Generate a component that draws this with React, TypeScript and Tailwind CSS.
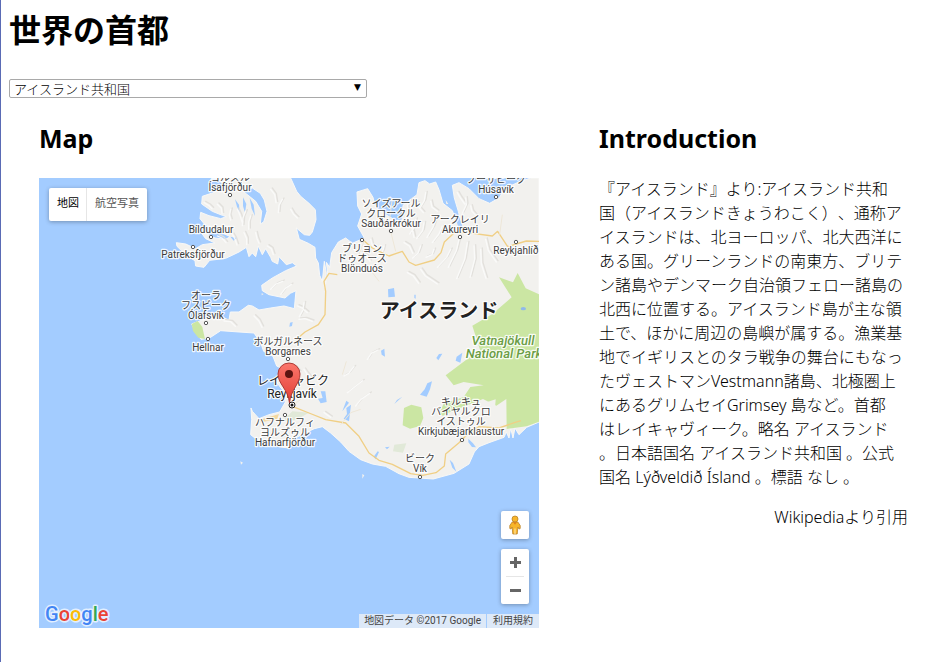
type Label = { x: number; y: number; lines: string[] };

const TOWNS: Label[] = [
  { x: 191, y: 3, lines: ['ヨルズル', 'Ísafjörður'] },
  { x: 172, y: 55, lines: ['Bíldudalur'] },
  { x: 154, y: 80, lines: ['Patreksfjörður'] },
  { x: 167, y: 121, lines: ['オーラ', 'フスビーク', 'Ólafsvík'] },
  { x: 169, y: 173, lines: ['Hellnar'] },
  { x: 249, y: 167, lines: ['ボルガルネース', 'Borgarnes'] },
  { x: 246, y: 248, lines: ['ハフナルフィ', 'ヨルズゥル', 'Hafnarfjörður'] },
  { x: 352, y: 29, lines: ['ソイズアール', 'クロークル', 'Sauðárkrókur'] },
  { x: 323, y: 74, lines: ['ブリョン', 'ドゥオース', 'Blönduós'] },
  { x: 421, y: 45, lines: ['アークレイリ', 'Akureyri'] },
  { x: 457, y: 5, lines: ['フーサビーク', 'Húsavík'] },
  { x: 477, y: 76, lines: ['Reykjahlíð'] },
  { x: 422, y: 227, lines: ['キルキュ', 'バイヤルクロ', 'イストゥル', 'Kirkjubæjarklaustur'] },
  { x: 381, y: 284, lines: ['ビーク', 'Vík'] },
];

const DOTS = [
  [191, 17], [172, 59], [154, 69], [167, 145], [169, 161], [249, 181], [246, 237],
  [352, 53], [323, 62], [421, 59], [457, 19], [477, 64], [423, 262], [381, 299],
];

const LAND =
  'M530 0L560 25L520 45L490 55L488 78L520 100L550 112L562 116L545 122L510 113L485 103L483 122L496 138L520 150L550 165L574 176L560 184L528 180L500 166L485 162L500 182L528 195L490 200L470 212L440 198L412 194L414 205L445 235L468 248L470 264L495 268L512 247L560 241L600 222L622 208L630 236L640 225L650 236L658 204L670 230L680 212L695 238L700 250L716 258L720 236L742 260L760 254L773 264L740 278L700 300L668 322L670 338L690 350L738 360L754 346L771 338L766 392L735 384L695 390L660 396L640 384L628 382L600 402L574 402L570 426L540 414L490 426L458 438L470 462L486 484L510 481L545 458L600 462L645 465L665 494L674 520L702 535L713 564L730 572L718 590L712 612L726 630L742 646L738 674L722 702L690 710L660 722L640 700L636 690L638 724L635 770L655 786L700 792L720 806L748 810L762 784L800 764L826 752L850 746L875 765L905 792L930 820L965 845L1000 858L1040 865L1080 887L1110 898L1183 903L1245 886L1290 858L1306 822L1320 806L1350 794L1395 778L1402 762L1410 780L1415 750L1422 780L1428 750L1440 770L1463 748L1500 732V0H1475L1440 12L1400 30L1380 60L1352 76L1320 62L1290 32L1260 14L1240 22L1246 60L1258 100L1270 148L1252 130L1240 98L1212 76L1200 35L1190 12L1172 18L1158 8L1140 14L1134 50L1092 82L1090 118L1072 128L1040 110L1010 88L1002 58L986 32L954 42L956 84L968 108L956 144L976 180L940 196L920 180L898 192L878 224L872 268L862 253L866 285L857 330L862 285L856 250L850 310L842 292L838 255L830 240L828 208L808 196L781 184L772 150L796 170L812 172L820 162L831 125L829 95L810 76L785 55L773 40L755 0ZM640 30L664 46L676 66L684 100L674 132L664 138L668 100L650 70L610 38Z';

const FJORDS =
  'M588 64l12 16 2 22-8-16ZM612 58l10 20-4 26-6-20ZM632 60l12 20 4 34-10-22ZM574 176l20 4-10 8ZM1066 96l24 10-4 30-20-8ZM1246 110l14 6 12 34-14-4Z';

const RELIEF =
  'M500 70l14 8 10 10 M540 75l12 12 2 16 M580 90l-4 18 4 14 M600 90l8 18 6 20 M625 95l-8 20 -2 24 M640 110l-6 18 0 22 M540 170l14 6 12 14 M585 165l8 14 6 18 M620 160l8 18 0 18 M655 160l4 18 6 14 M690 200l12 8 6 18 M700 30l12 16 4 24 M735 60l-10 18 -2 22 M760 90l8 14 12 12 M700 330l16-16 20-8 M730 345l14-18 18-12 M780 380l14 6 16 14 M785 420l18-2 22 8 M800 370l-4 24 -10 18 M650 410l14 14 10 20 M560 425l20 2 14 14 M1120 60l-10 18 2 30 M1140 70l4 14 14 16 M1165 40l-4 24 -12 20 M1180 66l4 18 16 12 M1110 130l14 16 6 28 M1135 120l-4 24 -14 20 M1160 130l-4 24 -18 24 M1195 120l-8 24 -18 30 M1215 140l-10 24 -20 26 M1100 190l16 10 10 22 M1150 200l-8 22 -16 14 M1190 210l-6 16 -18 8 M1260 40l8 14 14 20 M1285 56l2 20 -12 26 M1300 80l4 16 14 16 M1265 180l-8 34 -24 50 M1290 190l-8 50 -24 58 M1310 200l2 40 -14 54 M1330 210l2 44 14 44 M1345 180l8 34 24 34 M1240 210l-12 24 -28 30 M1110 280l18 10 16 22 M1150 270l14 20 36 24 M970 220l16 8 12 18 M1000 180l4 16 16 16 M1040 200l-4 16 -12 14 M760 560l14 4 12 14 M800 570l8 12 14 16 M920 590l14-8 16-20 M930 640l18-14 28-22 M955 680l16-20 26-18 M860 700l20 14 M990 540l12-18 20-10';

const WATER =
  'M1047 334l18-4 3 26-20 2ZM1026 518l10-6 2 24-10-6ZM1200 528l10-1-12 20-6-7ZM1253 536l17-12 -6 30-14-6ZM1165 616l14-6-6 24-10 22-20-6 14-16ZM1074 666l16-10-24 22ZM922 690l14-10-6 50-16-8 10-14ZM560 608l10-4 0 8ZM845 640l14 0 4 32-18 4-8-14 14-2ZM753 434l8-2-2 12-8 2ZM1288 782l14 14 9 12-12-1-11-14ZM1232 845l10 10 10 26-12-12ZM1126 350l4 0 0 12-4-2ZM910 700l12-32 8 6ZM1004 836l12-16 4 2-10 22ZM1038 808l14-2-8 8Z';

function Pegman() {
  return (
    <svg width="12" height="20" viewBox="0 0 12 20" aria-hidden="true">
      <path d="M3.200 7h5.600l2.400 3.500v3l-1.200.5-1.100-2-.7 7H3.800l-.7-7L2 14l-1.200-.5v-3z" fill="#f7b52a" stroke="#b9822a" strokeWidth=".8" />
      <path d="M4 7.300l2 2.400 2-2.400z" fill="#e2801b" />
      <circle cx="6" cy="4" r="3" fill="#f7b52a" stroke="#b9822a" strokeWidth=".8" />
      <path d="M6 13.500v5.500" stroke="#fff3c9" strokeWidth=".9" />
    </svg>
  );
}

function MapDrawing() {
  return (
    <svg className="absolute inset-0 h-full w-full" viewBox="0 0 500 450" role="img" aria-label="アイスランドの地図">
      <defs>
        <linearGradient id="pin" x1="0" y1="0" x2="0" y2="1">
          <stop offset="0" stopColor="#fb766b" />
          <stop offset="1" stopColor="#e13e35" />
        </linearGradient>
      </defs>
      <g transform="scale(.33333)">
        <path d={LAND} fill="#f2f1ee" stroke="#f8f8f7" strokeWidth="3" strokeLinejoin="round" />
        <path d={FJORDS} fill="#a3ccff" />
        <path d="M458 438l18-9 14 18 8 36-20-4-16-20Z" fill="#cbe6a3" />
        <path d="M1380 298l42 15 14-28 24 46 40 18v382l-37 14-60 8-1-90-30 20-40-20-100 40-20 10-12-6 14-30 60-20 20-30 40-5-60-10-30 10-24-30 80-60 24-14-24-75 60-35 58-50Z" fill="#cbe6a3" />
        <path d="M1095 690l22-10 30 8 6 32-10 24-30 8-22-10Z" fill="#cbe6a3" />
        <path d="M1370 664l-4 58-36 12-40-12 30-42Z" fill="#f2f1ee" />
        <path d="M760 700l50 4-40 22-40 4ZM1066 800l36-4-10 28-30-4Z" fill="#e1e9d8" />
        <path d="M668 724l52-16-6 16-56 10Z" fill="#f2d8a0" />
        <path d={RELIEF} fill="none" stroke="#e2e0dc" strokeWidth="4" strokeLinecap="round" strokeLinejoin="round" />
        <path d={RELIEF} fill="none" stroke="#fafaf9" strokeWidth="4" strokeLinecap="round" strokeLinejoin="round" transform="translate(-5 4)" />
        <path d={WATER} fill="#a3ccff" />
        <ellipse cx="1453" cy="392" rx="8" ry="5" fill="#8fb9ea" />
        <path d="M604 850l8 4-6 6ZM970 888l6 4-6 10ZM668 346l6 2-6 4ZM1220 66l8 12-6 0Z" fill="#f2f1ee" />
        <path
          d="M975 188l25 22 50 24 40-14 20 32 20 10 56-16 20-22 10-32 30-28 40 0 74 10 16-14 30 46 56-17 58 2M895 290l-25-4-15 24 5 30-2 70-20 30-40 22-28 24M760 685l50 20 50 20 60 10 40 40 30 50 30 22 40 12 55 28 36 5 40-8 25-20 4-36 40-34 20-20 40-28 60 4 46-16 20-6"
          fill="none"
          stroke="#f0cf85"
          strokeWidth="4"
          strokeLinejoin="round"
        />
        <path d="M905 740l30-36 30-10M770 600l20 60-30 24M1020 310l-60-80 15-40M1390 110l-8 60M1060 60l-10 80 20 80M910 590l12-40" fill="none" stroke="#eee7d8" strokeWidth="3" />
      </g>
      {DOTS.map(([x, y]) => (
        <circle key={`${x}-${y}`} cx={x} cy={y} r="1.700" fill="#fff" stroke="#555" />
      ))}
      <g
        fontFamily='Roboto, "Noto Sans CJK JP", sans-serif'
        fontSize="10"
        textAnchor="middle"
        fill="#3c3c3c"
        stroke="#fff"
        strokeOpacity=".85"
        strokeWidth="2.500"
        strokeLinejoin="round"
        paintOrder="stroke"
      >
        {TOWNS.map((t) =>
          t.lines.map((line, i) => (
            <text key={line + t.x} x={t.x} y={t.y + i * 10}>
              {line}
            </text>
          )),
        )}
        <text x="254" y="207" fontSize="12" fill="#222">レイキャビク</text>
        <text x="253" y="220" fontSize="12" fill="#222">Reykjavík</text>
        <text x="400" y="140" fontSize="20" fontWeight="700" fill="#222">アイスランド</text>
        <g fontSize="13" fontStyle="italic" fontWeight="500" fill="#6b9d45">
          <text x="464" y="167">Vatnajökull</text>
          <text x="465" y="180">National Park</text>
        </g>
      </g>
      <circle cx="253" cy="227" r="3" fill="#fff" stroke="#222" />
      <circle cx="253" cy="227" r="1.500" fill="#111" />
      <path d="M250.500 225C249 211 239 206 239 196a11 11 0 0 1 22 0C261 206 252 211 250.500 225Z" fill="url(#pin)" stroke="#a5302a" strokeWidth=".9" />
      <circle cx="250" cy="196" r="4" fill="#5c1411" />
      <text
        x="6"
        y="443"
        fontFamily='Roboto, sans-serif'
        fontSize="20"
        fontWeight="500"
        stroke="#fff"
        strokeOpacity=".7"
        strokeWidth="3"
        strokeLinejoin="round"
        paintOrder="stroke"
      >
        <tspan fill="#4285f4">G</tspan>
        <tspan fill="#ea4335">o</tspan>
        <tspan fill="#fbbc05">o</tspan>
        <tspan fill="#4285f4">g</tspan>
        <tspan fill="#34a853">l</tspan>
        <tspan fill="#ea4335">e</tspan>
      </text>
    </svg>
  );
}

function CapitalMap() {
  return (
    <div className="relative mt-[22px] h-[450px] overflow-hidden bg-[#a3ccff] font-[Roboto,'Noto_Sans_CJK_JP',sans-serif]">
      <MapDrawing />
      <div className="absolute left-2.5 top-2.5 flex h-[33px] rounded-xs bg-white text-[11px] shadow-[0_1px_4px_rgba(0,0,0,0.3)]">
        <button type="button" className="border-r border-[#e6e6e6] pl-2 pr-[7px] text-black">地図</button>
        <button type="button" className="px-2 text-[#565656]">航空写真</button>
      </div>
      <div className="absolute bottom-6 right-2.5 flex w-7 flex-col gap-2.5">
        <button type="button" aria-label="ストリートビュー" className="flex h-7 items-center justify-center rounded-xs bg-white shadow-[0_1px_4px_rgba(0,0,0,0.3)]">
          <Pegman />
        </button>
        <div className="flex flex-col items-center rounded-xs bg-white shadow-[0_1px_4px_rgba(0,0,0,0.3)]">
          <button type="button" aria-label="拡大" className="flex h-[27px] w-7 items-center justify-center">
            <svg width="11" height="11" viewBox="0 0 11 11"><path d="M5.500 0v11M0 5.500h11" stroke="#666" strokeWidth="3" /></svg>
          </button>
          <span className="h-px w-[18px] bg-[#e6e6e6]" />
          <button type="button" aria-label="縮小" className="flex h-[27px] w-7 items-center justify-center">
            <svg width="11" height="11" viewBox="0 0 11 11"><path d="M0 5.500h11" stroke="#666" strokeWidth="3" /></svg>
          </button>
        </div>
      </div>
      <div className="absolute bottom-0 right-0 flex h-3.5 text-[10px] leading-[14px] text-[#444]">
        <span className="bg-[#f5f5f5]/70 px-[5px]">地図データ ©2017 Google</span>
        <a href="#terms" className="ml-px bg-[#f5f5f5]/70 px-1.5">利用規約</a>
      </div>
    </div>
  );
}

export default function App() {
  return (
    <main className="min-h-screen border-l border-[#5a6bb5] bg-white px-2 pt-2 font-['Noto_Sans','Noto_Sans_CJK_JP',sans-serif] text-base text-black">
      <h1 className="text-[32px] font-bold leading-[43px]">世界の首都</h1>
      <div className="relative mt-7 w-[358px]">
        <select
          aria-label="国"
          className="block h-[19px] w-full appearance-none rounded-xs border border-[#a9a9a9] bg-white pl-1 pt-px text-[13px] font-light leading-4"
        >
          <option>アイスランド共和国</option>
        </select>
        <span aria-hidden="true" className="pointer-events-none absolute right-1.5 top-0 font-['DejaVu_Sans'] text-[9px] leading-[17px]">▼</span>
      </div>
      <div className="flex gap-[60px] pl-[30px] pr-[11px]">
        <section className="w-[500px] shrink-0 pt-[22px]">
          <h2 className="text-[25px] font-bold leading-9">Map</h2>
          <CapitalMap />
        </section>
        <section className="min-w-0 flex-1 pt-[22px]">
          <h2 className="text-[25px] font-bold leading-9">Introduction</h2>
          <p className="mt-[21px] pr-1 font-light leading-6 [text-spacing-trim:space-all]">
            『アイスランド』より:アイスランド共和国（アイスランドきょうわこく）、通称アイスランドは、北ヨーロッパ、北大西洋にある国。グリーンランドの南東方、ブリテン諸島やデンマーク自治領フェロー諸島の北西に位置する。アイスランド島が主な領土で、ほかに周辺の島嶼が属する。漁業基地でイギリスとのタラ戦争の舞台にもなったヴェストマンVestmann諸島、北極圏上にあるグリムセイGrimsey 島など。首都
            <br />
            はレイキャヴィーク。略名 アイスランド
            <br />
            。日本語国名 アイスランド共和国 。公式国名 Lýðveldið Ísland 。標語 なし 。
          </p>
          <p className="mt-4 text-right font-light leading-6">Wikipediaより引用</p>
        </section>
      </div>
    </main>
  );
}
